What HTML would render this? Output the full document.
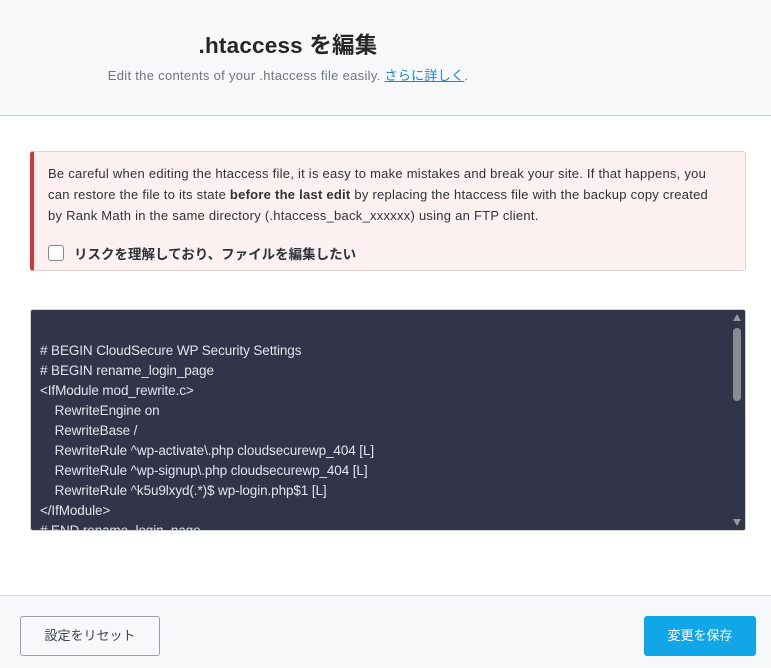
<!DOCTYPE html>
<html><head><meta charset="utf-8"><style>
*{box-sizing:border-box;margin:0;padding:0}
body{width:771px;height:668px;overflow:hidden;background:#fff;font-family:"Liberation Sans","Noto Sans CJK JP",sans-serif;color:#23282d;position:relative}
.hdr{position:absolute;left:0;top:0;width:771px;height:116px;background:#f7f8f9;border-bottom:1px solid #c9ccd0}
.t{position:absolute;left:0;width:576px;text-align:center}
.t1{top:28px;font-size:22.5px;font-weight:bold;color:#242628;letter-spacing:0.2px}
.t2{top:65px;font-size:13px;color:#707579;letter-spacing:0.3px}
.t2 a{color:#1c86c8;text-decoration:underline}
.note{position:absolute;left:30px;top:151px;width:716px;height:120px;background:#fcf0f1;border:1px solid #e6cfd0;border-left:4px solid #d63638;border-radius:3px;padding:11px 14px;font-size:13px;line-height:21px;color:#2c3338;white-space:nowrap;letter-spacing:0.25px}
.cb{position:absolute;left:14px;top:93px;width:16px;height:16px;border:1px solid #7e8993;border-radius:3px;background:#fff}
.lbl{position:absolute;left:40px;top:92px;font-weight:bold;font-size:13.5px;color:#2c3338;letter-spacing:0}
.ed{position:absolute;left:30px;top:309px;width:716px;height:222px;background:#32344a;border-radius:3px;overflow:hidden;border:1px solid #d0d0d0}
.code{position:absolute;left:9px;top:31px;font-size:13.5px;line-height:20px;color:#e4e4ea;white-space:pre;letter-spacing:-0.1px}
.sb{position:absolute;right:0;top:0;width:15px;height:100%;background:#32344a}
.th{position:absolute;left:3px;top:18px;width:8px;height:73px;background:#8b8c92;border-radius:4px}
.ar{position:absolute;left:3px;width:0;height:0;border-left:4px solid transparent;border-right:4px solid transparent}
.ft{position:absolute;left:0;top:595px;width:771px;height:73px;background:#f7f8f9;border-top:1px solid #d8dbdf}
.b1{position:absolute;left:20px;top:20px;width:140px;height:40px;border:1px solid #9aa0a6;border-radius:3px;background:#f7f8f9;font-size:13px;color:#3c434a;text-align:center;line-height:38px}
.b2{position:absolute;left:644px;top:20px;width:112px;height:40px;border-radius:3px;background:#10a6e8;font-size:13px;color:#fff;text-align:center;line-height:40px}
</style></head><body>
<div class="hdr">
<div class="t t1">.htaccess を編集</div>
<div class="t t2">Edit the contents of your .htaccess file easily. <a>さらに詳しく</a>.</div>
</div>
<div class="note">Be careful when editing the htaccess file, it is easy to make mistakes and break your site. If that happens, you<br>can restore the file to its state <b>before the last edit</b> by replacing the htaccess file with the backup copy created<br>by Rank Math in the same directory (.htaccess_back_xxxxxx) using an FTP client.
<div class="cb"></div><div class="lbl">リスクを理解しており、ファイルを編集したい</div></div>
<div class="ed"><div class="code"># BEGIN CloudSecure WP Security Settings
# BEGIN rename_login_page
&lt;IfModule mod_rewrite.c&gt;
    RewriteEngine on
    RewriteBase /
    RewriteRule ^wp-activate\.php cloudsecurewp_404 [L]
    RewriteRule ^wp-signup\.php cloudsecurewp_404 [L]
    RewriteRule ^k5u9lxyd(.*)$ wp-login.php$1 [L]
&lt;/IfModule&gt;
# END rename_login_page</div>
<div class="sb"><div class="ar" style="top:4px;border-bottom:7px solid #999"></div><div class="th"></div><div class="ar" style="bottom:4px;border-top:7px solid #999"></div></div></div>
<div class="ft"><div class="b1">設定をリセット</div><div class="b2">変更を保存</div></div>
</body></html>
